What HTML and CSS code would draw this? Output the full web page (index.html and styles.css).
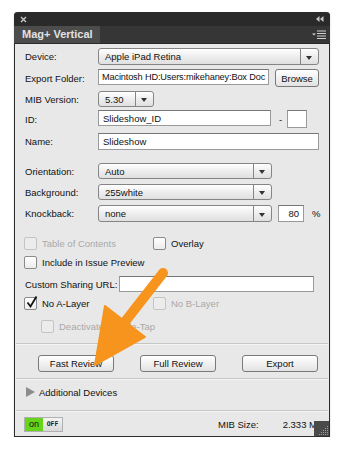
FILE: index.html
```html
<!DOCTYPE html>
<html lang="en">
<head>
   <meta charset="UTF-8">
   <title>Mag+ Vertical</title>
   <link rel="stylesheet" href="styles.css">
</head>
<body>
   <div class="panel">
      <div class="titlebar">
         <svg class="close" width="7" height="7" viewBox="0 0 7 7"><path d="M1 1L6 6M6 1L1 6" stroke="#c8c8c8" stroke-width="1.4"/></svg>
         <svg class="collapse" width="8" height="6" viewBox="0 0 8 6"><path d="M0 3L3.5 0V6Z M4 3L7.5 0V6Z" fill="#c8c8c8"/></svg>
      </div>
      <div class="tabbar">
         <div class="tab">Mag+ Vertical</div>
         <svg class="menu" width="15" height="9" viewBox="0 0 15 9"><path d="M0 3.5H4L2 5.5Z" fill="#d0d0d0"/><path d="M5 1H14M5 3.5H14M5 6H14M5 8.5H14" stroke="#d0d0d0" stroke-width="1.1"/></svg>
      </div>

      <div class="content">
         <div class="row r-device">
            <span class="lbl">Device:</span>
            <div class="select s-wide"><span class="val">Apple iPad Retina</span><span class="drop"></span></div>
         </div>
         <div class="row r-export">
            <span class="lbl">Export Folder:</span>
            <div class="field f-folder">Macintosh HD:Users:mikehaney:Box Doc</div>
            <div class="btn b-browse">Browse</div>
         </div>
         <div class="row r-mib">
            <span class="lbl">MIB Version:</span>
            <div class="select s-mib"><span class="val">5.30</span><span class="drop"></span></div>
         </div>
         <div class="row r-id">
            <span class="lbl">ID:</span>
            <div class="field f-id">Slideshow_ID</div>
            <span class="dash">-</span>
            <div class="field f-small"></div>
         </div>
         <div class="row r-name">
            <span class="lbl">Name:</span>
            <div class="field f-name">Slideshow</div>
         </div>

         <div class="row r-orient">
            <span class="lbl">Orientation:</span>
            <div class="select s-mid"><span class="val">Auto</span><span class="drop"></span></div>
         </div>
         <div class="row r-bg">
            <span class="lbl">Background:</span>
            <div class="select s-mid"><span class="val">255white</span><span class="drop"></span></div>
         </div>
         <div class="row r-knock">
            <span class="lbl">Knockback:</span>
            <div class="select s-mid"><span class="val">none</span><span class="drop"></span></div>
            <div class="field f-pct">80</div>
            <span class="pct">%</span>
         </div>

         <div class="row r-toc">
            <div class="check-item ci-left disabled"><span class="box"></span>Table of Contents</div>
            <div class="check-item"><span class="box"></span>Overlay</div>
         </div>
         <div class="row r-include">
            <div class="check-item"><span class="box"></span>Include in Issue Preview</div>
         </div>
         <div class="row r-url">
            <span class="lbl-url">Custom Sharing URL:</span>
            <div class="field f-url"></div>
         </div>
         <div class="row r-layers">
            <div class="check-item ci-left">
               <span class="box"><svg width="13" height="13" viewBox="0 0 13 13"><path d="M2.5 6.5L5.5 10.5L11.5 0.5" fill="none" stroke="#111" stroke-width="1.8"/></svg></span>No A-Layer
            </div>
            <div class="check-item disabled"><span class="box"></span>No B-Layer</div>
         </div>
         <div class="row r-deact">
            <div class="check-item disabled"><span class="box"></span>Deactivate Double-Tap</div>
         </div>

         <div class="sep s-1"></div>

         <div class="row r-buttons">
            <div class="btn b-action">Fast Review</div>
            <div class="btn b-action">Full Review</div>
            <div class="btn b-action">Export</div>
         </div>

         <div class="sep s-2"></div>

         <div class="row r-devices">
            <span class="tri"></span>Additional Devices
         </div>

         <div class="sep s-3"></div>

         <div class="footer">
            <div class="toggle"><span class="on">on</span><span class="off">OFF</span></div>
            <span class="size-lbl">MIB Size:</span>
            <span class="size-val">2.333 MB</span>
            <div class="grip">
               <svg width="16" height="15" viewBox="0 0 16 15"><g fill="#9a9a9a"><rect x="13" y="5" width="1" height="1"/><rect x="11" y="7" width="1" height="1"/><rect x="13" y="7" width="1" height="1"/><rect x="9" y="9" width="1" height="1"/><rect x="11" y="9" width="1" height="1"/><rect x="13" y="9" width="1" height="1"/><rect x="7" y="11" width="1" height="1"/><rect x="9" y="11" width="1" height="1"/><rect x="11" y="11" width="1" height="1"/><rect x="13" y="11" width="1" height="1"/><rect x="5" y="13" width="1" height="1"/><rect x="7" y="13" width="1" height="1"/><rect x="9" y="13" width="1" height="1"/><rect x="11" y="13" width="1" height="1"/><rect x="13" y="13" width="1" height="1"/></g></svg>
            </div>
         </div>
      </div>
   </div>

   <!-- callout arrow pointing at Fast Review -->
   <svg class="callout" width="342" height="451" viewBox="0 0 342 451">
      <line x1="163" y1="273" x2="124" y2="323" stroke="#f7941d" stroke-width="10" stroke-linecap="round"/>
      <polygon points="105,306 145,337 95,365" fill="#f7941d" stroke="#f7941d" stroke-width="2" stroke-linejoin="round"/>
   </svg>
</body>
</html>
```

FILE: styles.css
```css
body {
   margin: 0;
   background: #fff;
   font-family: "Liberation Sans", Arial, sans-serif;
   font-size: 9.5px;
   color: #111;
}

.panel {
   position: relative;
   margin: 12px 0 0 14px;
   width: 314px;
   height: 424px;
   border: 1px solid #2e2e2e;
   border-top: none;
   border-radius: 4px 4px 0 0;
   background: #e8e8e8;
   display: flex;
   flex-direction: column;
   box-shadow: 0 1px 2px rgba(0, 0, 0, 0.2);
}

.titlebar {
   height: 14px;
   background: #2a2a2a;
   border-radius: 4px 4px 0 0;
   margin: 0 -1px;
   display: flex;
   align-items: center;
   justify-content: space-between;
   padding: 0 6px 0 6px;
}

.tabbar {
   height: 18px;
   background: #363636;
   margin: 0 -1px;
   display: flex;
   align-items: flex-end;
   justify-content: space-between;
   border-bottom: 1px solid #2a2a2a;
   box-sizing: border-box;
}

.tab {
   height: 17px;
   width: 86px;
   background: #4c4c4c;
   color: #e2e2e2;
   font-weight: bold;
   font-size: 11px;
   line-height: 17px;
   padding-left: 8px;
   box-sizing: border-box;
}

.menu {
   margin: 0 3px 4px 0;
}

.content {
   flex: 1;
   display: flex;
   flex-direction: column;
}

.row {
   display: flex;
   align-items: center;
   padding-left: 10px;
}

.lbl {
   width: 73px;
   flex: none;
}

/* vertical rhythm */
.r-device { margin-top: 4px; height: 17px; }
.r-export { margin-top: 4px; height: 18px; }
.r-mib { margin-top: 4px; height: 16px; }
.r-id { margin-top: 3px; height: 18px; }
.r-name { margin-top: 5px; height: 17px; }
.r-orient { margin-top: 13px; height: 16px; }
.r-bg { margin-top: 5px; height: 16px; }
.r-knock { margin-top: 5px; height: 17px; }
.r-toc { margin-top: 15px; height: 13px; padding-left: 9px; }
.r-include { margin-top: 6px; height: 13px; padding-left: 9px; }
.r-url { margin-top: 7px; height: 16px; }
.r-layers { margin-top: 5px; height: 13px; padding-left: 9px; }
.r-deact { margin-top: 10px; height: 13px; padding-left: 26px; }
.r-buttons { margin-top: 10px; height: 17px; padding-left: 23px; gap: 26px; }
.r-devices { margin-top: 6px; height: 12px; padding-left: 11px; }

.sep {
   height: 1px;
   background: #c6c6c6;
   border-bottom: 1px solid #f4f4f4;
   margin: 0 1px;
}

.s-1 { margin-top: 10px; }
.s-2 { margin-top: 6px; }
.s-3 { margin-top: 12px; }

.select {
   height: 100%;
   box-sizing: border-box;
   border: 1px solid #858585;
   border-radius: 3px;
   background: linear-gradient(#ffffff, #ececec 55%, #e0e0e0);
   display: flex;
   align-items: center;
}

.select .val {
   flex: 1;
   padding-left: 6px;
   white-space: nowrap;
   overflow: hidden;
}

.select .drop {
   width: 17px;
   height: 100%;
   border-left: 1px solid #858585;
   position: relative;
   flex: none;
}

.select .drop::after {
   content: "";
   position: absolute;
   left: 5px;
   top: 50%;
   margin-top: -1px;
   border-left: 3.5px solid transparent;
   border-right: 3.5px solid transparent;
   border-top: 4px solid #333;
}

.s-wide { width: 221px; }
.s-mib { width: 56px; }
.s-mid { width: 174px; }

.field {
   height: 100%;
   box-sizing: border-box;
   border: 1px solid #9a9a9a;
   border-top-color: #777;
   background: #fff;
   padding-left: 4px;
   display: flex;
   align-items: center;
   white-space: nowrap;
   overflow: hidden;
}

.f-folder {
   width: 171px;
   height: 16px;
   align-self: flex-start;
   padding-left: 3px;
   font-size: 9.2px;
   letter-spacing: -0.15px;
}
.f-id { width: 173px; height: 16px; align-self: flex-start; }
.f-small { width: 20px; height: 18px; }
.f-name { width: 221px; }
.f-url { width: 195px; margin-left: 2px; }
.f-pct { width: 26px; margin-left: 6px; justify-content: flex-end; padding-right: 4px; }

.dash {
   margin: 0 5px 0 8px;
}

.pct {
   margin-left: 8px;
}

.lbl-url {
   white-space: nowrap;
}

.btn {
   box-sizing: border-box;
   height: 17px;
   border: 1px solid #7a7a7a;
   border-radius: 3px;
   background: linear-gradient(#ffffff, #eeeeee 60%, #e2e2e2);
   display: flex;
   align-items: center;
   justify-content: center;
}

.b-browse {
   width: 44px;
   height: 18px;
   margin-left: 6px;
}

.b-action {
   width: 76px;
}

.check-item {
   display: flex;
   align-items: center;
   white-space: nowrap;
}

.ci-left {
   width: 129px;
}

.check-item .box {
   width: 13px;
   height: 13px;
   box-sizing: border-box;
   border: 1px solid #8a8a8a;
   border-radius: 2px;
   background: linear-gradient(#ffffff, #ececec);
   margin-right: 5px;
   position: relative;
   flex: none;
}

.check-item .box svg {
   position: absolute;
   left: 0;
   top: -2px;
}

.disabled {
   color: #a8a8a8;
}

.disabled .box {
   border-color: #c4c4c4;
   background: #ececec;
}

.tri {
   width: 0;
   height: 0;
   border-top: 5px solid transparent;
   border-bottom: 5px solid transparent;
   border-left: 9px solid #8c8c8c;
   margin-right: 4px;
}

.footer {
   flex: 1;
   display: flex;
   align-items: center;
   padding-left: 9px;
   position: relative;
   overflow: hidden;
}

.toggle {
   display: flex;
   height: 15px;
   border: 1px solid #b0b0b0;
   box-sizing: border-box;
   margin-top: 1px;
}

.toggle .on {
   width: 18px;
   background: #66d41a;
   color: #111;
   font-size: 9px;
   line-height: 13px;
   text-align: center;
}

.toggle .off {
   width: 19px;
   background: linear-gradient(#f4f4f4, #d8d8d8);
   font-family: "DejaVu Sans Mono", monospace;
   font-size: 6.5px;
   font-weight: bold;
   line-height: 13px;
   text-align: center;
   color: #222;
}

.size-lbl {
   margin-left: 155px;
}

.size-val {
   margin-left: 24px;
   white-space: nowrap;
}

.grip {
   position: absolute;
   right: -1px;
   bottom: 0;
   width: 16px;
   height: 15px;
   background: #4a4a4a;
}

.grip svg {
   display: block;
}

.callout {
   position: absolute;
   left: 0;
   top: 0;
   pointer-events: none;
}
```
